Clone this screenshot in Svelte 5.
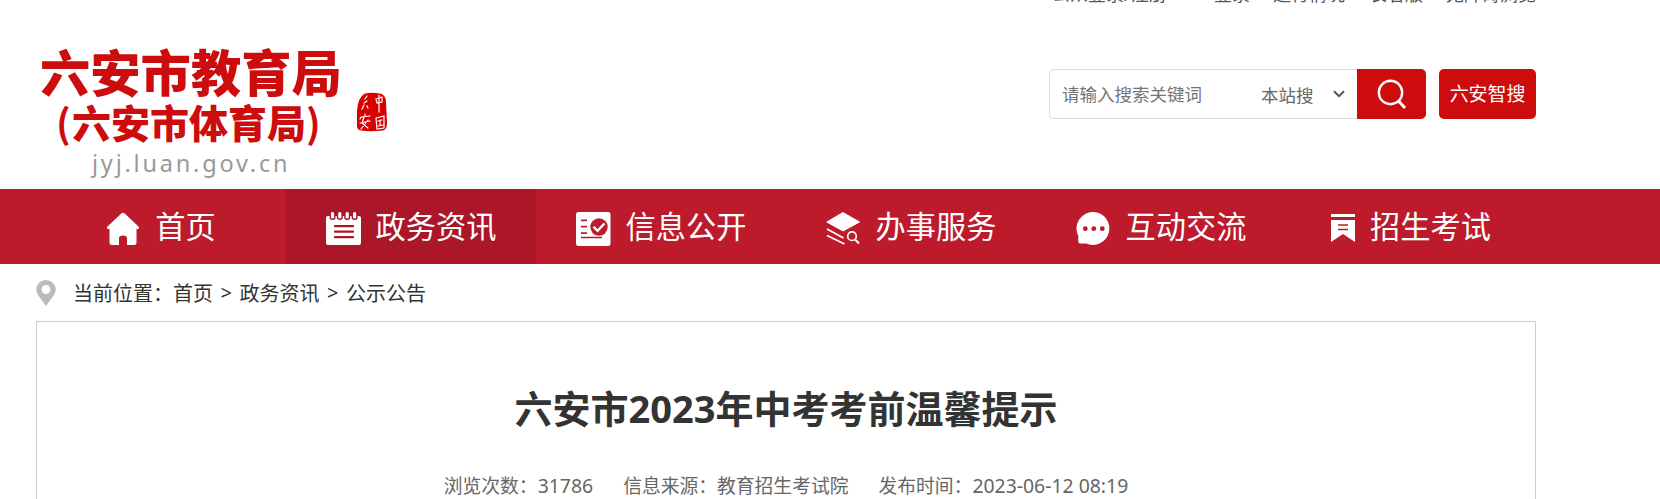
<script lang="ts">
  const topLinks = [
    { label: '公众登录/注册', width: 162 },
    { label: '登录', width: 59 },
    { label: '运行情况', width: 96 },
    { label: '长者版', width: 77 },
    { label: '无障碍浏览', width: 90 },
  ];

  const navItems = [
    { icon: 'home', label: '首页' },
    { icon: 'news', label: '政务资讯' },
    { icon: 'open', label: '信息公开' },
    { icon: 'service', label: '办事服务' },
    { icon: 'chat', label: '互动交流' },
    { icon: 'exam', label: '招生考试' },
  ];

  let active = 'news';
  let keyword = '';
</script>

<div class="page">
  <header class="header wrap">
    <div class="top-links">
      {#each topLinks as link}
        <a href="#top" style="width: {link.width}px">{link.label}</a>
      {/each}
    </div>
    <div class="header-main">
      <div class="logo">
        <div class="logo-text">
          <div class="logo-name">六安市教育局</div>
          <div class="logo-sub"><i>(</i>六安市体育局<i>)</i></div>
          <div class="logo-url">jyj.luan.gov.cn</div>
        </div>
        <svg class="seal" width="32" height="40" viewBox="0 0 32 40">
          <path d="M9 1.5 Q16 0 24 1.5 Q30 3 30 10 L31 31 Q31 38 27 38.5 Q14 40 5 38.5 Q1 38 1 34 L1 19 Q2 5 9 1.5Z" fill="#d90000" />
          <g fill="none" stroke="#fff" stroke-width="1.2" stroke-linecap="round">
            <path d="M11 4 9 7M11 9 8 11M8 13 6 17M11 14 12 16" />
            <path d="M20 7 26 5 26 10 21 11ZM23 3 23 20" />
            <path d="M9 22 9 24M4 27 5 25 14 24M8 25 6 31 12 36M12 28 5 37M4 31 14 29" />
            <path d="M20 26 28 24 28 36 21 37ZM22 29 26 28M24 28 24 34M22 34 27 33" />
          </g>
        </svg>
      </div>
      <div class="search">
        <div class="search-box">
          <input type="text" placeholder="请输入搜索关键词" bind:value={keyword} />
          <span class="scope">本站搜</span>
          <svg class="arrow" width="12" height="8" viewBox="0 0 12 8">
            <path d="M1 1.2 6 6.2 11 1.2" fill="none" stroke="#555" stroke-width="2" />
          </svg>
        </div>
        <button class="search-btn" aria-label="搜索">
          <svg width="30" height="32" viewBox="0 0 30 32">
            <circle cx="13.5" cy="14.5" r="11.7" fill="none" stroke="#fff" stroke-width="2.4" />
            <path d="M21.5 23 28 30" stroke="#fff" stroke-width="3" />
          </svg>
        </button>
        <button class="smart-btn">六安智搜</button>
      </div>
    </div>
  </header>

  <nav class="nav">
    <div class="nav-list wrap">
      {#each navItems as item}
        <a href="#nav" class="nav-item" class:active={active === item.icon} on:click={() => (active = item.icon)}>
          {#if item.icon === 'home'}
            <svg width="34" height="34" viewBox="0 0 34 34">
              <path d="M15.6 1.3 Q17 .2 18.4 1.3 L32.5 14.5 Q34 16.5 31.5 17 L30.5 17 V30.5 Q30.5 33 28 33 H21 V26 Q21 23.5 17 23.5 Q13 23.5 13 26 V33 H6 Q3.5 33 3.5 30.5 V17 H2.5 Q0 16.5 1.5 14.5Z" />
            </svg>
          {:else if item.icon === 'news'}
            <svg width="35" height="34" viewBox="0 0 35 34">
              <path d="M2 4 H33 Q35 4 35 6 V31 Q35 33 33 33 H2 Q0 33 0 31 V6 Q0 4 2 4Z" />
              {#each [6.5, 13.8, 21.2, 28.6] as x}
                <path d="M{x - 3} 3.5V5.5A3 2.5 0 0 0 {x + 3} 5.5V3.5Z" fill="#ab1628" />
                <rect x={x - 1.6} y="0" width="3.2" height="6.5" rx="1.5" />
              {/each}
              <path d="M9 14.2H27M9 19.7H27M9 25.2H27" stroke="#ab1628" stroke-width="2.2" stroke-linecap="round" />
            </svg>
          {:else if item.icon === 'open'}
            <svg width="35" height="34" viewBox="0 0 35 34">
              <rect width="34.5" height="34" rx="2.5" />
              <path d="M5 8.3H11M5 14.7H11M5 21.2H11M5 25.5H26" stroke="#bd1a2b" stroke-width="1.7" />
              <circle cx="23" cy="15" r="8.7" fill="#bd1a2b" />
              <path d="M17.5 14.7 21.5 18.8 28.5 11.5" fill="none" stroke="#fff" stroke-width="2.3" />
            </svg>
          {:else if item.icon === 'service'}
            <svg width="35" height="34" viewBox="0 0 35 34">
              <path d="M17 .5 33.5 10 17 19 .8 10Z" stroke="#fff" stroke-linejoin="round" />
              <path d="M1 17 17.5 26M1 23.5 18.5 32" fill="none" stroke="#fff" stroke-width="1.8" />
              <circle cx="26" cy="24.2" r="4.3" fill="none" stroke="#fff" stroke-width="1.6" />
              <path d="M29 27.5 33 31.5" stroke="#fff" stroke-width="2" />
            </svg>
          {:else if item.icon === 'chat'}
            <svg width="35" height="34" viewBox="0 0 35 34">
              <path d="M17.5 0 A16.5 16.5 0 1 1 10 31.5 H4 Q2.3 31.5 2.3 29.5 V24 A16.5 16.5 0 0 1 17.5 0Z" />
              <g fill="#bd1a2b">
                <circle cx="9.3" cy="16.7" r="2.4" />
                <circle cx="17.8" cy="16.7" r="2.4" />
                <circle cx="26.3" cy="16.7" r="2.4" />
              </g>
            </svg>
          {:else}
            <svg width="24" height="34" viewBox="0 0 24 34">
              <path d="M0 2H24V5H0ZM0 8H24V30L12 22 0 30Z" />
              <path d="M7 13H17M7 17.5H17" stroke="#bd1a2b" stroke-width="1.6" />
            </svg>
          {/if}
          <span>{item.label}</span>
        </a>
      {/each}
    </div>
  </nav>

  <div class="crumbs wrap">
    <svg width="20" height="26" viewBox="0 0 20 26">
      <path d="M10 0 A9.8 9.8 0 0 1 19.8 9.8 C19.8 14 14 20 10 26 C6 20 .2 14 .2 9.8 A9.8 9.8 0 0 1 10 0Z M10 5 A4.5 4.5 0 1 0 10 14 A4.5 4.5 0 1 0 10 5Z" fill="#bbb" fill-rule="evenodd" />
    </svg>
    <span class="crumb-label">当前位置：</span>
    <a href="#home">首页</a>
    <span class="sep">&gt;</span>
    <a href="#news">政务资讯</a>
    <span class="sep">&gt;</span>
    <a href="#notice">公示公告</a>
  </div>

  <main class="article wrap">
    <h1>六安市2023年中考考前温馨提示</h1>
    <div class="meta">
      <span>浏览次数：<b>31786</b></span>
      <span>信息来源：教育招生考试院</span>
      <span>发布时间：<b>2023-06-12 08:19</b></span>
    </div>
  </main>
</div>

<style>
  :global(body) {
    margin: 0;
    background: #fff;
    overflow: hidden;
  }

  .page {
    height: 499px;
    overflow: hidden;
    font-family: "Noto Sans", "Noto Sans CJK SC", sans-serif;
    color: #333;
  }

  .page * {
    box-sizing: border-box;
  }

  a {
    color: inherit;
    text-decoration: none;
  }

  .wrap {
    width: 1500px;
    margin-left: 36px;
  }

  .header {
    display: flow-root;
    height: 189px;
  }

  .top-links {
    display: flex;
    justify-content: flex-end;
    height: 20px;
    margin-top: -16px;
    line-height: 20px;
    font-size: 18px;
    color: #555;
    white-space: nowrap;
  }

  .header-main {
    display: flex;
    justify-content: space-between;
    align-items: flex-start;
  }

  .logo {
    display: flex;
    padding: 37px 0 0 4px;
  }

  .logo-text {
    width: 301px;
    font-family: "Noto Sans CJK SC", sans-serif;
    white-space: nowrap;
    color: #cd0c0e;
  }

  .logo-name {
    height: 58px;
    line-height: 58px;
    font-size: 50.3px;
    font-weight: 900;
  }

  .logo-sub {
    display: flex;
    height: 45px;
    padding-left: 16px;
    line-height: 45px;
    font-size: 39px;
    font-weight: 900;
  }

  .logo-sub i {
    width: 16px;
    font-style: normal;
    font-weight: 700;
  }

  .logo-url {
    margin-top: 4px;
    padding-left: 52px;
    font-family: "Noto Sans", sans-serif;
    font-size: 23.5px;
    line-height: 30px;
    letter-spacing: 2.8px;
    color: #999;
  }

  .seal {
    margin: 51px 0 0 15px;
  }

  .search {
    display: flex;
    height: 50px;
    margin-top: 65px;
  }

  .search-box {
    display: flex;
    align-items: center;
    width: 308px;
    border: 1px solid #ddd;
    border-right: none;
    border-radius: 5px 0 0 5px;
    font-size: 17.5px;
    color: #666;
  }

  .search-box input {
    width: 211px;
    padding: 0 0 0 12px;
    border: none;
    outline: none;
    background: none;
    font: inherit;
  }

  .search-box input::placeholder {
    color: #757575;
  }

  .arrow {
    margin-left: 19px;
  }

  .search-btn,
  .smart-btn {
    padding: 0;
    border: none;
    background: #cd0c0e;
    color: #fff;
    font-family: inherit;
    cursor: pointer;
  }

  .search-btn {
    display: flex;
    align-items: center;
    justify-content: center;
    width: 69px;
    border-radius: 0 5px 5px 0;
  }

  .smart-btn {
    width: 97px;
    margin-left: 13px;
    padding-bottom: 2px;
    border-radius: 5px;
    font-size: 18.9px;
  }

  .nav {
    height: 75px;
    background: #bd1a2b;
  }

  .nav-list {
    display: flex;
  }

  .nav-item {
    display: flex;
    align-items: center;
    justify-content: center;
    gap: 15px;
    width: 250px;
    height: 75px;
    color: #fff;
    font-size: 30.2px;
    line-height: 75px;
  }

  .nav-item svg {
    margin-top: 4px;
    fill: #fff;
  }

  .nav-item.active {
    background: #ab1628;
  }

  .crumbs {
    display: flex;
    align-items: center;
    height: 57px;
    font-size: 20px;
  }

  .crumb-label {
    margin-left: 17px;
  }

  .sep {
    width: 26.5px;
    text-align: center;
  }

  .article {
    height: 300px;
    padding-top: 56px;
    border: 1px solid #ccc;
    text-align: center;
  }

  h1 {
    margin: 0;
    font-size: 38px;
    line-height: 60px;
    font-weight: 700;
  }

  .meta {
    display: flex;
    justify-content: center;
    gap: 30px;
    margin-top: 33px;
    font-size: 18.8px;
    line-height: 30px;
    color: #666;
  }

  .meta b {
    font-size: 19.4px;
    font-weight: 400;
  }
</style>
